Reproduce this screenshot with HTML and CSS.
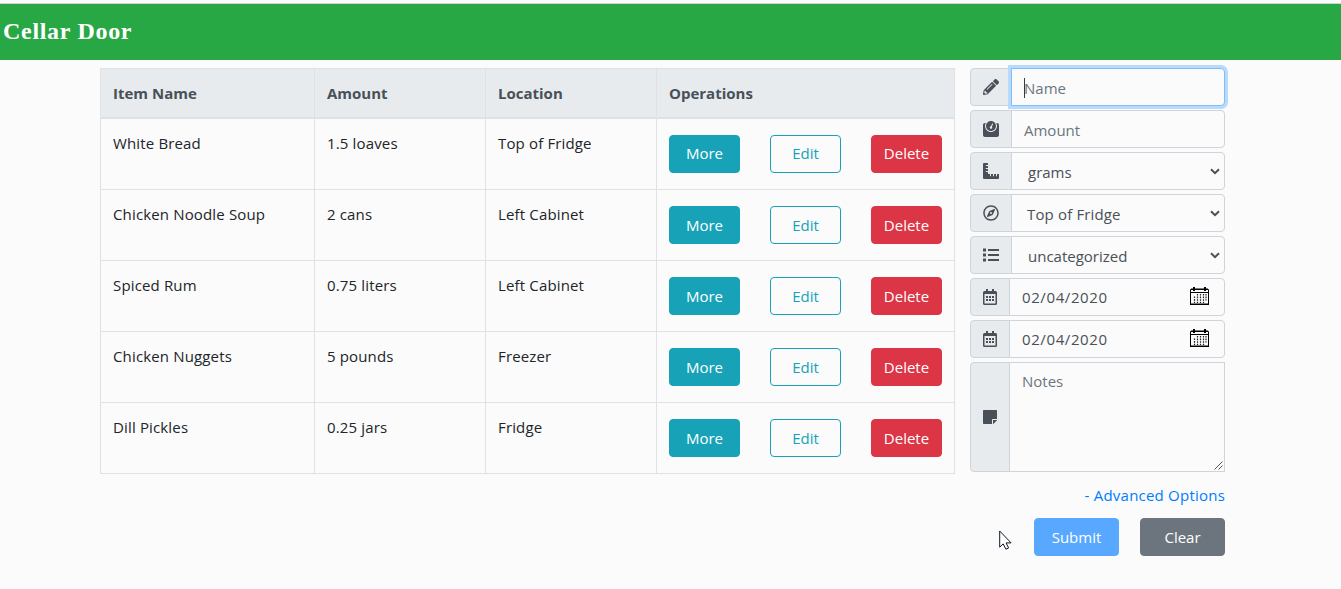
FILE: index.html
```html
<!DOCTYPE html>
<html lang="en">
<head>
<meta charset="utf-8">
<title>Cellar Door</title>
<link rel="stylesheet" href="styles.css">
</head>
<body>
<svg class="defs" width="0" height="0">
  <symbol id="cal" viewBox="0 0 14 16"><path d="M3 0h2v2h4V0h2v2h1.5A1.5 1.5 0 0 1 14 3.5v11a1.5 1.5 0 0 1-1.5 1.5h-11A1.5 1.5 0 0 1 0 14.500v-11A1.500 1.500 0 0 1 1.500 2H3zM1.500 5v9.500h11V5zM3 7h2v2H3zm3 0h2v2H6zm3 0h2v2H9zM3 10h2v2H3zm3 0h2v2H6zm3 0h2v2H9z" fill-rule="evenodd"/></symbol>
  <symbol id="arrow" viewBox="0 0 10 7"><path d="M1 1.200l4 4 4-4" fill="none" stroke="#495057" stroke-width="2"/></symbol>
  <symbol id="picker" viewBox="0 0 19 18"><path d="M.5 2.500h18v15H.5zM.5 5.500h18" fill="none" stroke="#000"/><path d="M1 1.500h17v1H1zM3 0h2v4H3zM14 0h2v4h-2zM0 16.500h19V18H0z"/><path d="M7.500 7v9M10.500 7v9M13.500 7v9M16 7v6.500M4.500 9.500V16" fill="none" stroke="#222" stroke-width="1.200" stroke-dasharray="1.600 1"/></symbol>
</svg>
<header class="navbar"><a class="brand">Cellar Door</a></header>
<main class="page">
  <table class="items">
    <colgroup><col class="c-name"><col class="c-mid"><col class="c-mid"><col class="c-ops"></colgroup>
    <thead><tr><th>Item Name</th><th>Amount</th><th>Location</th><th>Operations</th></tr></thead>
    <tbody>
      <tr><td>White Bread</td><td>1.5 loaves</td><td>Top of Fridge</td><td><div class="ops"><button class="btn more">More</button><button class="btn edit">Edit</button><button class="btn delete">Delete</button></div></td></tr>
      <tr><td>Chicken Noodle Soup</td><td>2 cans</td><td>Left Cabinet</td><td><div class="ops"><button class="btn more">More</button><button class="btn edit">Edit</button><button class="btn delete">Delete</button></div></td></tr>
      <tr><td>Spiced Rum</td><td>0.75 liters</td><td>Left Cabinet</td><td><div class="ops"><button class="btn more">More</button><button class="btn edit">Edit</button><button class="btn delete">Delete</button></div></td></tr>
      <tr><td>Chicken Nuggets</td><td>5 pounds</td><td>Freezer</td><td><div class="ops"><button class="btn more">More</button><button class="btn edit">Edit</button><button class="btn delete">Delete</button></div></td></tr>
      <tr><td>Dill Pickles</td><td>0.25 jars</td><td>Fridge</td><td><div class="ops"><button class="btn more">More</button><button class="btn edit">Edit</button><button class="btn delete">Delete</button></div></td></tr>
    </tbody>
  </table>
  <form class="form">
    <div class="group"><span class="addon"><svg width="16" height="16" viewBox="0 0 512 512"><path d="M497.900 142.100l-46.100 46.100c-4.700 4.700-12.300 4.700-17 0l-111-111c-4.700-4.700-4.700-12.300 0-17l46.100-46.100c18.700-18.700 49.100-18.700 67.900 0l60.100 60.100c18.800 18.700 18.800 49.100 0 67.900zM284.200 99.800L21.600 362.400.4 483.900c-2.900 16.400 11.400 30.600 27.800 27.800l121.500-21.300 262.600-262.600c4.700-4.700 4.700-12.300 0-17l-111-111c-4.800-4.700-12.400-4.700-17.100 0zM124.100 339.900c-5.500-5.500-5.500-14.300 0-19.800l154-154c5.500-5.500 14.300-5.500 19.800 0s5.500 14.300 0 19.800l-154 154c-5.500 5.500-14.300 5.500-19.800 0zM88 424h48v36.300l-64.500 11.300-31.100-31.100L51.700 376H88v48z"/></svg></span><div class="field focused"><i class="caret"></i><span class="hint">Name</span></div></div>
    <div class="group"><span class="addon"><svg width="16" height="16" viewBox="0 0 512 512"><path d="M448 64h-25.980C438.440 92.280 448 125.010 448 160c0 105.870-86.130 192-192 192S64 265.870 64 160c0-34.990 9.560-67.720 25.980-96H64C28.710 64 0 92.710 0 128v320c0 35.290 28.710 64 64 64h384c35.290 0 64-28.710 64-64V128c0-35.290-28.710-64-64-64zM256 320c88.370 0 160-71.630 160-160S344.370 0 256 0 96 71.630 96 160s71.630 160 160 160zm-.3-151.940l33.580-78.360c3.500-8.170 12.940-11.920 21.030-8.410 8.120 3.480 11.880 12.890 8.410 21l-33.670 78.550C291.730 188 296 197.450 296 208c0 22.090-17.910 40-40 40s-40-17.910-40-40c0-21.980 17.760-39.770 39.700-39.940z"/></svg></span><div class="field"><span class="hint">Amount</span></div></div>
    <div class="group"><span class="addon"><svg width="16" height="16" viewBox="0 0 16 16"><path d="M1 0h3.500q.5 0 .5.500V2H2.800v1H5v2H2.800v1H5v2H2.800v1H5v2H7v2.200h1V11h2v2.200h1V11h2v2.200h1V11h1.500q.5 0 .5.500V15q0 1-1 1H1q-1 0-1-1V1q0-1 1-1z"/></svg></span><div class="field select"><span>grams</span><svg class="chev"><use href="#arrow"/></svg></div></div>
    <div class="group"><span class="addon"><svg width="16" height="16" viewBox="-8 0 512 512"><path d="M347.940 129.860L203.600 195.830a31.938 31.938 0 0 0-15.770 15.770l-65.970 144.340c-7.610 16.650 9.540 33.810 26.200 26.200l144.340-65.970a31.938 31.938 0 0 0 15.770-15.770l65.970-144.340c7.610-16.660-9.540-33.810-26.200-26.200zm-77.360 148.720c-12.470 12.470-32.690 12.470-45.160 0-12.470-12.470-12.470-32.690 0-45.160 12.470-12.470 32.690-12.470 45.160 0 12.470 12.470 12.470 32.690 0 45.160zM248 8C111.030 8 0 119.030 0 256s111.030 248 248 248 248-111.030 248-248S384.970 8 248 8zm0 448c-110.280 0-200-89.720-200-200S137.720 56 248 56s200 89.720 200 200-89.720 200-200 200z"/></svg></span><div class="field select place"><span>Top of Fridge</span><svg class="chev"><use href="#arrow"/></svg></div></div>
    <div class="group"><span class="addon"><svg width="16" height="16" viewBox="0 0 16 16"><path d="M0 1.500h3v3H0zM0 6.500h3v3H0zM0 11.500h3v3H0zM5 2h11v2H5zM5 7h11v2H5zM5 12h11v2H5z"/></svg></span><div class="field select"><span>uncategorized</span><svg class="chev"><use href="#arrow"/></svg></div></div>
    <div class="group"><span class="addon narrow"><svg width="14" height="16"><use href="#cal"/></svg></span><div class="field date"><span>02/04/2020</span><svg class="picker"><use href="#picker"/></svg></div></div>
    <div class="group"><span class="addon narrow"><svg width="14" height="16"><use href="#cal"/></svg></span><div class="field date"><span>02/04/2020</span><svg class="picker"><use href="#picker"/></svg></div></div>
    <div class="group notes"><span class="addon narrow"><svg width="14" height="14" viewBox="0 0 14 14"><path d="M.7 0h12.600q.7 0 .7.700V9H9.700Q9 9 9 9.700V14H.7Q0 14 0 13.300V.7Q0 0 .7 0zM10 10h4v.3L10.300 14H10z"/></svg></span><div class="field area"><span class="hint">Notes</span><svg class="grip" width="9" height="9" viewBox="0 0 9 9"><path d="M.5 8.500l8-8M4.500 8.500l4-4" stroke="#555"/></svg></div></div>
    <a class="advanced">- Advanced Options</a>
    <div class="actions"><button class="btn submit" type="button">Submit</button><button class="btn clear" type="button">Clear</button></div>
  </form>
</main>
<svg class="cursor" width="13" height="20" viewBox="0 0 13 20"><path d="M.7 1v16.200l3.500-3.300 2.700 5.300 2.700-1.200-2.500-5.100h5z" fill="#fff" stroke="#111827" stroke-width="1"/></svg>
</body>
</html>
```
FILE: styles.css
```css
* { box-sizing: border-box; }
body {
  margin: 0;
  height: 589px;
  overflow: hidden;
  background: #fbfbfb;
  color: #212529;
  font: 15px/24px "Open Sans", "Noto Sans", sans-serif;
}
.defs { display: block; }
.navbar {
  height: 57px;
  margin-top: 3px;
  padding: 10px 3px;
  border-top: 1px solid #ccd5cf;
  background: #28a745;
}
.brand {
  color: #fff;
  font: bold 24px/34px "Liberation Serif", serif;
  letter-spacing: .7px;
}
.page {
  display: flex;
  align-items: flex-start;
  gap: 15px;
  padding: 8px 0 0 100px;
}
.items {
  width: 855px;
  margin-right: -1px;
  table-layout: fixed;
  border-collapse: collapse;
}
.items { width: auto; }
.c-name { width: 214px; }
.c-mid { width: 171px; }
.c-ops { width: 298px; }
.items { width: 854px; margin-right: 0; }
.items th, .items td {
  border: 1px solid #dee2e6;
  padding: 12px 12px 0;
  text-align: left;
  vertical-align: top;
}
.items th {
  height: 49px;
  background: #e7ebee;
  color: #495057;
  border-bottom-width: 2px;
  font-weight: 700;
}
.items td { height: 71px; letter-spacing: .15px; }
.items tbody tr:first-child td { height: 72px; }
.ops {
  display: flex;
  justify-content: space-between;
  padding-top: 4px;
  letter-spacing: 0;
}
.btn {
  width: 71px;
  height: 38px;
  padding: 0;
  border: 1px solid;
  border-radius: 4px;
  color: #fff;
  font: inherit;
  line-height: 22px;
  padding-bottom: 1px;
}
.more { background: #17a2b8; border-color: #17a2b8; }
.edit { background: transparent; color: #17a2b8; border-color: #17a2b8; }
.delete { background: #dc3545; border-color: #dc3545; }
.form {
  display: flex;
  flex-direction: column;
  gap: 4px;
  width: 255px;
}
.group { display: flex; height: 38px; }
.addon {
  display: flex;
  align-items: center;
  width: 42px;
  padding-left: 12px;
  border: 1px solid #ced4da;
  border-radius: 4px 0 0 4px;
  background: #e7ebee;
  fill: #495057;
}
.narrow { width: 40px; }
.field {
  position: relative;
  display: flex;
  align-items: center;
  flex: 1;
  margin-left: -1px;
  padding: 1px 12px 0;
  border: 1px solid #ced4da;
  border-radius: 0 4px 4px 0;
  background: #fbfbfb;
  color: #495057;
}
.hint { color: #6c757d; }
.focused {
  z-index: 1;
  border-color: #80bdff;
  box-shadow: 0 0 0 3px #b8dafb;
}
.caret {
  position: absolute;
  left: 12px;
  top: 9px;
  width: 1px;
  height: 20px;
  background: #343a40;
}
.select { justify-content: space-between; padding: 1px 4px 0 16px; }
.place { padding-left: 15px; letter-spacing: .15px; }
.chev { width: 10px; height: 7px; margin-top: -1px; }
.date { justify-content: space-between; padding: 0 15px 1px 12px; letter-spacing: .6px; }
.picker { width: 19px; height: 18px; margin-top: -1px; }
.notes { height: 110px; }
.area { align-items: flex-start; padding-top: 6px; border-radius: 0; }
.grip { position: absolute; right: 1px; bottom: 1px; }
.advanced {
  margin-top: 7px;
  color: #007bff;
  text-align: right;
  letter-spacing: .22px;
}
.actions {
  display: flex;
  justify-content: flex-end;
  gap: 21px;
  margin-top: 7px;
}
.actions .btn { width: 85px; }
.submit { background: #58a8ff; border-color: #58a8ff; }
.clear { background: #6c757d; border-color: #6c757d; }
.cursor { position: absolute; left: 999px; top: 530px; }
```
